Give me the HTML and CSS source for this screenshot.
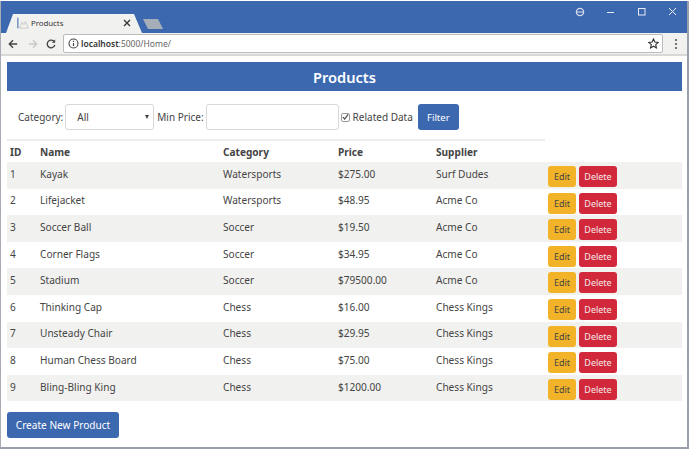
FILE: index.html
```html
<!DOCTYPE html>
<html lang="en">
<head>
<meta charset="utf-8">
<title>Products</title>
<link rel="stylesheet" href="styles.css">
</head>
<body>
<div class="window">
  <div class="titlebar">
    <div class="tabstrip">
      <div class="tab">
        <svg class="favicon" width="12" height="12" viewBox="0 0 14 14"><path d="M1 1v12" stroke="#3c68b0" stroke-width="1.2"/><path d="M3 13l3-7 2 3 2-4 3 8z" fill="none" stroke="#c4c4c4"/></svg>
        <span class="tabtitle">Products</span>
        <svg class="tabclose" width="8" height="8" viewBox="0 0 8 8"><path d="M1 1l6 6M7 1l-6 6" stroke="#333" stroke-width="1.3"/></svg>
      </div>
      <div class="newtab"></div>
    </div>
    <div class="wincontrols">
      <svg width="10" height="10" viewBox="0 0 10 10"><circle cx="5" cy="5" r="3.6" fill="none" stroke="#d5dbe8" stroke-width="1.3"/><path d="M1 5h8" stroke="#d5dbe8"/></svg>
      <svg width="10" height="10" viewBox="0 0 10 10"><path d="M1 5.5h7" stroke="#e6eaf2" stroke-width="1"/></svg>
      <svg width="10" height="10" viewBox="0 0 10 10"><rect x="1.5" y="1.5" width="6.5" height="6.5" fill="none" stroke="#e6eaf2"/></svg>
      <svg width="10" height="10" viewBox="0 0 10 10"><path d="M1 1l7 7M8 1L1 8" stroke="#eef1f6" stroke-width="1"/></svg>
    </div>
  </div>
  <div class="toolbar">
    <svg class="tb-back" width="10" height="10" viewBox="0 0 12 12"><path d="M11 6H2M6 1.5L1.5 6 6 10.5" fill="none" stroke="#444" stroke-width="1.6"/></svg>
    <svg class="tb-fwd" width="10" height="10" viewBox="0 0 12 12"><path d="M1 6h9M6 1.5L10.5 6 6 10.5" fill="none" stroke="#c8c8c8" stroke-width="1.6"/></svg>
    <svg class="tb-reload" width="10" height="10" viewBox="0 0 12 12"><path d="M10 3.500A4.600 4.600 0 1 0 10.600 7" fill="none" stroke="#444" stroke-width="1.6"/><path d="M7 4.500h4v-4z" fill="#444"/></svg>
    <div class="omnibox">
      <svg width="11" height="11" viewBox="0 0 11 11"><circle cx="5.5" cy="5.5" r="4.5" fill="none" stroke="#444" stroke-width="1.1"/><path d="M5.5 5v3M5.5 2.800v1.200" stroke="#444" stroke-width="1.2"/></svg>
      <span class="url"><b>localhost</b>:5000/Home/</span>
      <svg class="star" width="11" height="11" viewBox="0 0 12 12"><path d="M6 1l1.5 3.400 3.700.4-2.800 2.400.8 3.600L6 9l-3.200 1.800.8-3.600L.8 4.800l3.700-.4z" fill="none" stroke="#333" stroke-width="1.2"/></svg>
    </div>
    <svg width="4" height="12" viewBox="0 0 4 12"><circle cx="2" cy="2" r="1.1" fill="#555"/><circle cx="2" cy="6" r="1.1" fill="#555"/><circle cx="2" cy="10" r="1.1" fill="#555"/></svg>
  </div>
  <main class="page">
    <h1 class="banner">Products</h1>
    <form class="filter">
      <label class="flabel">Category:</label>
      <div class="select">All<span class="caret"></span></div>
      <label class="flabel">Min Price:</label>
      <div class="input"></div>
      <label class="check"><span class="box"><svg width="8" height="8" viewBox="0 0 8 8"><path d="M1 4l2 2.500L7 1" fill="none" stroke="#444" stroke-width="1.3"/></svg></span>Related Data</label>
      <button type="button" class="btn primary filterbtn">Filter</button>
    </form>
    <table class="products">
      <colgroup><col class="c1"><col class="c2"><col class="c3"><col class="c4"><col class="c5"><col class="c6"></colgroup>
      <thead>
        <tr><th>ID</th><th>Name</th><th>Category</th><th>Price</th><th>Supplier</th><td class="blank"></td></tr>
      </thead>
      <tbody>
        <tr><td>1</td><td>Kayak</td><td>Watersports</td><td>$275.00</td><td>Surf Dudes</td><td class="actions"><span class="btn edit">Edit</span><span class="btn del">Delete</span></td></tr>
        <tr><td>2</td><td>Lifejacket</td><td>Watersports</td><td>$48.95</td><td>Acme Co</td><td class="actions"><span class="btn edit">Edit</span><span class="btn del">Delete</span></td></tr>
        <tr><td>3</td><td>Soccer Ball</td><td>Soccer</td><td>$19.50</td><td>Acme Co</td><td class="actions"><span class="btn edit">Edit</span><span class="btn del">Delete</span></td></tr>
        <tr><td>4</td><td>Corner Flags</td><td>Soccer</td><td>$34.95</td><td>Acme Co</td><td class="actions"><span class="btn edit">Edit</span><span class="btn del">Delete</span></td></tr>
        <tr><td>5</td><td>Stadium</td><td>Soccer</td><td>$79500.00</td><td>Acme Co</td><td class="actions"><span class="btn edit">Edit</span><span class="btn del">Delete</span></td></tr>
        <tr><td>6</td><td>Thinking Cap</td><td>Chess</td><td>$16.00</td><td>Chess Kings</td><td class="actions"><span class="btn edit">Edit</span><span class="btn del">Delete</span></td></tr>
        <tr><td>7</td><td>Unsteady Chair</td><td>Chess</td><td>$29.95</td><td>Chess Kings</td><td class="actions"><span class="btn edit">Edit</span><span class="btn del">Delete</span></td></tr>
        <tr><td>8</td><td>Human Chess Board</td><td>Chess</td><td>$75.00</td><td>Chess Kings</td><td class="actions"><span class="btn edit">Edit</span><span class="btn del">Delete</span></td></tr>
        <tr><td>9</td><td>Bling-Bling King</td><td>Chess</td><td>$1200.00</td><td>Chess Kings</td><td class="actions"><span class="btn edit">Edit</span><span class="btn del">Delete</span></td></tr>
      </tbody>
    </table>
    <button type="button" class="btn primary create">Create New Product</button>
  </main>
</div>
</body>
</html>
```
FILE: styles.css
```css
* { box-sizing: border-box; }
html, body { margin: 0; padding: 0; background: #fff; }
body { width: 690px; height: 450px; overflow: hidden; font-family: "Noto Sans", "Open Sans", sans-serif; color: #444; }
.window { width: 689px; height: 448px; margin-top: 1px; border-right: 2px solid #9aa0ab; border-bottom: 2px solid #9aa0ab; border-left: 1px solid #a8acb4; display: flex; flex-direction: column; background: #fff; }
.titlebar { height: 32px; flex: none; background: #3c68b0; display: flex; justify-content: space-between; }
.tabstrip { display: flex; align-items: flex-end; padding-left: 5px; }
.tab { width: 136px; height: 19px; background: #f1f1f0; clip-path: polygon(7px 0, 128px 0, 136px 100%, 0 100%); display: flex; align-items: center; padding: 0 0 1px 11px; }
.favicon { flex: none; }
.tabtitle { font-size: 7.800px; margin-left: 2px; color: #333; flex: 1; }
.tabclose { flex: none; margin-right: 11px; }
.newtab { width: 20px; height: 10px; margin: 0 0 4px 1px; background: #a6aeba; clip-path: polygon(0 0, 15px 0, 20px 100%, 5px 100%); }
.wincontrols { display: flex; padding: 6px 0 0; }
.wincontrols svg { margin-right: 21px; }
.wincontrols svg:last-child { margin-right: 9px; }
.toolbar { height: 23px; flex: none; background: #f1f1f0; display: flex; align-items: center; padding: 0 0 0 7px; border-bottom: 2px solid #d8d8d8; }
.toolbar > svg { flex: none; }
.tb-back { margin-right: 10px; }
.tb-fwd { margin-right: 8px; }
.tb-reload { margin-right: 7px; }
.omnibox { width: 600px; height: 19px; background: #fff; border: 1px solid #bcbcbc; border-radius: 2px; display: flex; align-items: center; padding: 0 3px 0 4px; margin-right: 11px; }
.url { font-size: 8.500px; color: #666; margin-left: 2px; flex: 1; }
.url b { font-weight: 600; color: #333; }
.page { flex: 1; padding: 6px 0 0 6px; }
.banner { margin: 0; width: 675px; height: 29px; background: #3c68b0; color: #fff; font-size: 14.600px; font-weight: 600; text-align: center; line-height: 30px; }
.filter { display: flex; align-items: center; height: 26px; margin-top: 13px; padding-left: 11px; font-size: 10px; }
.flabel { margin-right: 2px; }
.select { position: relative; width: 89px; height: 26px; border: 1px solid #d8d8d8; border-radius: 3px; padding: 5px 0 0 11px; margin-right: 3px; }
.caret { position: absolute; right: 4px; top: 10px; width: 0; height: 0; border-left: 2.500px solid transparent; border-right: 2.500px solid transparent; border-top: 4px solid #444; }
.input { width: 133px; height: 26px; border: 1px solid #d8d8d8; border-radius: 3px; margin-right: 2px; }
.check { display: flex; align-items: center; margin-right: 5px; }
.box { width: 9px; height: 9px; border: 1px solid #999; border-radius: 2px; display: flex; align-items: center; justify-content: center; margin-right: 3px; }
.btn { display: inline-flex; align-items: center; justify-content: center; border: 0; border-radius: 3px; font-family: inherit; padding: 0; }
.primary { background: #3c68b0; color: #fff; }
.filterbtn { width: 41px; height: 26px; font-size: 9.500px; }
.products { border-collapse: collapse; table-layout: fixed; width: 675px; margin-top: 9px; font-size: 10.100px; }
.c1 { width: 30px; } .c2 { width: 183px; } .c3 { width: 115px; } .c4 { width: 98px; } .c5 { width: 112px; } .c6 { width: 137px; }
.products th { height: 22px; padding: 0 0 0 3px; text-align: left; font-weight: 700; border-top: 2px solid #eeeeee; }
.products tbody td { height: 26.600px; padding: 0 0 3px 3px; }
.products tbody tr:nth-child(odd) { background: #f1f1f0; }
.products tbody td.actions { padding: 4px 0 0 3px; vertical-align: top; }
.edit, .del { height: 21px; font-size: 9px; }
.edit { width: 28px; background: #f2b328; color: #444; margin-right: 3px; }
.del { width: 38px; background: #d2283c; color: #f4e8e8; }
.create { display: flex; width: 112px; height: 26px; margin-top: 11px; font-size: 10.100px; }
```
